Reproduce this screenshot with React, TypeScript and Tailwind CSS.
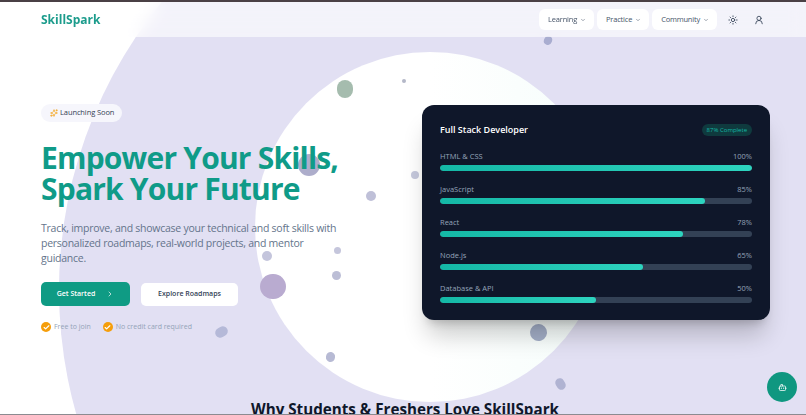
import { Bot, ChevronDown, ChevronRight, Sparkles, Sun, UserRound, Check } from "lucide-react";

const navItems = ["Learning", "Practice", "Community"];

const skills = [
  { name: "HTML & CSS", pct: 100 },
  { name: "JavaScript", pct: 85 },
  { name: "React", pct: 78 },
  { name: "Node.js", pct: 65 },
  { name: "Database & API", pct: 50 },
];

// floating dots in the hero background: x, y, w, h, colour, rotation
const blobs = [
  { x: 337, y: 80, w: 16, h: 18, c: "#a5bcae", r: 0 },
  { x: 402, y: 79, w: 4, h: 4, c: "#b4b8c8", r: 0 },
  { x: 544, y: 36, w: 8, h: 9, c: "#a9add0", r: 20 },
  { x: 298, y: 154, w: 22, h: 22, c: "#adadcb", r: 0 },
  { x: 411, y: 171, w: 8, h: 8, c: "#c5c8dc", r: 0 },
  { x: 366, y: 191, w: 10, h: 10, c: "#bfc0d8", r: 0 },
  { x: 262, y: 251, w: 10, h: 10, c: "#c4c5dc", r: 0 },
  { x: 334, y: 247, w: 7, h: 7, c: "#c5c6dc", r: 0 },
  { x: 332, y: 271, w: 9, h: 9, c: "#bcbed6", r: 0 },
  { x: 260, y: 274, w: 26, h: 25, c: "#b9abd0", r: 0 },
  { x: 215, y: 327, w: 13, h: 10, c: "#b5b9d8", r: -30 },
  { x: 326, y: 352, w: 9, h: 10, c: "#b7bad4", r: 10 },
  { x: 530, y: 324, w: 17, h: 17, c: "#a4afc8", r: -20 },
  { x: 556, y: 378, w: 9, h: 12, c: "#b0b3d2", r: -30 },
];

function Perk({ label }: { label: string }) {
  return (
    <span className="flex items-center gap-[3px]">
      <span className="flex h-[10px] w-[10px] items-center justify-center rounded-full bg-[#f59e0b]">
        <Check className="h-[7px] w-[7px] text-white" strokeWidth={4} />
      </span>
      {label}
    </span>
  );
}

export default function App() {
  return (
    <div
      className="relative h-[415px] w-[806px] overflow-hidden bg-white text-[#0f172a]"
      style={{ fontFamily: '"Open Sans", "Noto Sans", sans-serif' }}
    >
      {/* background shapes */}
      <div className="absolute left-[59px] top-[-165px] h-[910px] w-[910px] rounded-full bg-[#e2e0f3]" />
      <div className="absolute left-[255px] top-[52px] h-[350px] w-[350px] rounded-full bg-gradient-to-r from-white via-white to-[#f5fdfb]" />
      {blobs.map((b, i) => (
        <div
          key={i}
          className="absolute rounded-full"
          style={{ left: b.x, top: b.y, width: b.w, height: b.h, background: b.c, transform: `rotate(${b.r}deg)` }}
        />
      ))}

      <div className="relative flex h-full flex-col">
        <div className="h-0.5 shrink-0 bg-[#4a4045]" />
        {/* Navbar */}
        <header className="flex h-[35px] shrink-0 items-center justify-between bg-white/60 px-[41px] backdrop-blur-sm">
          <span className="text-[12px] font-bold text-[#1c9c8c]">SkillSpark</span>
          <nav className="flex items-center gap-[3px]">
            {navItems.map((item) => (
              <button
                key={item}
                className="flex h-[21px] items-center gap-[3px] rounded-md bg-white pl-[9px] pr-[8px] text-[7.5px] font-medium tracking-[-0.2px] text-[#475569]"
              >
                {item}
                <ChevronDown className="h-[6px] w-[6px]" />
              </button>
            ))}
            <Sun className="ml-[8px] h-[10px] w-[10px] text-[#334155]" />
            <UserRound className="ml-[13px] mr-px h-[10px] w-[10px] text-[#334155]" />
          </nav>
        </header>

        {/* Hero */}
        <main className="flex h-[364px] shrink-0 pl-[41px] pr-[36px]">
          <div className="w-[381px] shrink-0 pt-[67px]">
            <div className="flex h-[18px] w-[81px] items-center gap-[2px] whitespace-nowrap rounded-full bg-[#f6f6fc] pl-[9px] text-[7.5px] font-medium tracking-[-0.1px] text-[#334155]">
              <Sparkles className="h-2 w-2 text-[#f59e0b]" />
              Launching Soon
            </div>
            <h1 className="mt-[20px] text-[30px] font-bold leading-[31px] tracking-[-0.8px] text-[#0f9b88]">
              Empower Your Skills,
              <br />
              Spark Your Future
            </h1>
            <p className="mt-[17px] w-[300px] text-[10.5px] leading-[15px] tracking-[-0.25px] text-[#64748b]">
              Track, improve, and showcase your technical and soft skills with personalized roadmaps, real-world projects, and mentor guidance.
            </p>
            <div className="mt-[16px] flex items-center gap-[11px]">
              <button className="flex h-[24px] w-[89px] items-center justify-center gap-[11px] rounded-[5px] bg-[#0f9b84] text-[7px] font-semibold text-white">
                Get Started
                <ChevronRight className="h-2 w-2" />
              </button>
              <button className="h-[23px] w-[97px] rounded-[5px] bg-white text-[7px] font-semibold text-[#334155]">
                Explore Roadmaps
              </button>
            </div>
            <div className="mt-[16px] flex items-center gap-[12px] text-[7px] text-[#94a3b8]">
              <Perk label="Free to join" />
              <Perk label="No credit card required" />
            </div>
          </div>

          {/* Progress card */}
          <div className="mt-[68px] h-[215px] w-[348px] rounded-[12px] bg-[#0f172a] px-[18px] pt-[17px] shadow-xl shadow-black/20">
            <div className="flex h-[16px] items-center justify-between">
              <span className="text-[9px] font-semibold text-white">Full Stack Developer</span>
              <span className="flex h-[12px] items-center rounded-full bg-[#0f3a3e] px-[5px] text-[6px] text-[#14b8a6]">87% Complete</span>
            </div>
            <div className="mt-[12px] flex flex-col gap-[12px]">
              {skills.map((skill) => (
                <div key={skill.name}>
                  <div className="flex h-[14px] items-center justify-between text-[7.5px] text-[#94a3b8]">
                    <span>{skill.name}</span>
                    <span>{skill.pct}%</span>
                  </div>
                  <div className="mt-px h-[6px] overflow-hidden rounded-full bg-[#334155]">
                    <div className="h-full rounded-full bg-gradient-to-r from-[#14b8a6] to-[#2dd4bf]" style={{ width: `${skill.pct}%` }} />
                  </div>
                </div>
              ))}
            </div>
          </div>
        </main>

        <h2 className="-mt-[2px] pl-[4px] text-center text-[15.2px] font-bold leading-[20px] text-[#0f172a]">Why Students &amp; Freshers Love SkillSpark</h2>
      </div>

      <div className="absolute bottom-0 left-0 h-px w-full bg-[#8b8b90]" />
      <button className="absolute bottom-[13px] left-[767px] flex h-[30px] w-[30px] items-center justify-center rounded-full bg-[#0f9780] text-white">
        <Bot className="h-[9px] w-[9px]" />
      </button>
    </div>
  );
}
